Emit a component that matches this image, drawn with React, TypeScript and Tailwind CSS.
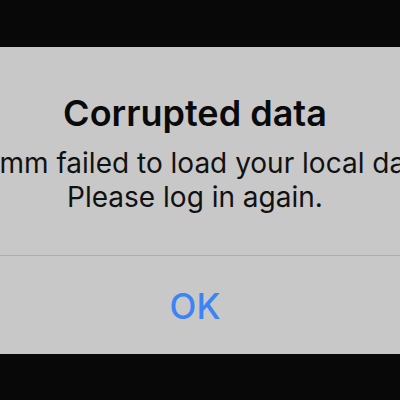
export default function App() {
  return (
    <div className="w-[400px] h-[400px] bg-[#080808] overflow-hidden" style={{ fontFamily: 'Inter, "Noto Sans", sans-serif' }}>
      <div className="pt-[47px]">
        <div className="ml-[-65px] w-[520px] h-[307px] bg-[#c8c8c8] flex flex-col items-center pt-[45px]">
          <div className="text-[36px] leading-[42px] font-semibold text-[#0a0a0a] whitespace-nowrap">Corrupted data</div>
          <div className="mt-[12px] text-[28px] leading-[34px] text-[#111] text-center whitespace-nowrap">
            <div>Gromm failed to load your local data.</div>
            <div>Please log in again.</div>
          </div>
          <div className="mt-[41px] w-full h-px bg-[#adadad]" />
          <div className="mt-[29px] text-[35px] leading-[42px] font-medium text-[#3b84f5]">OK</div>
        </div>
      </div>
    </div>
  );
}
